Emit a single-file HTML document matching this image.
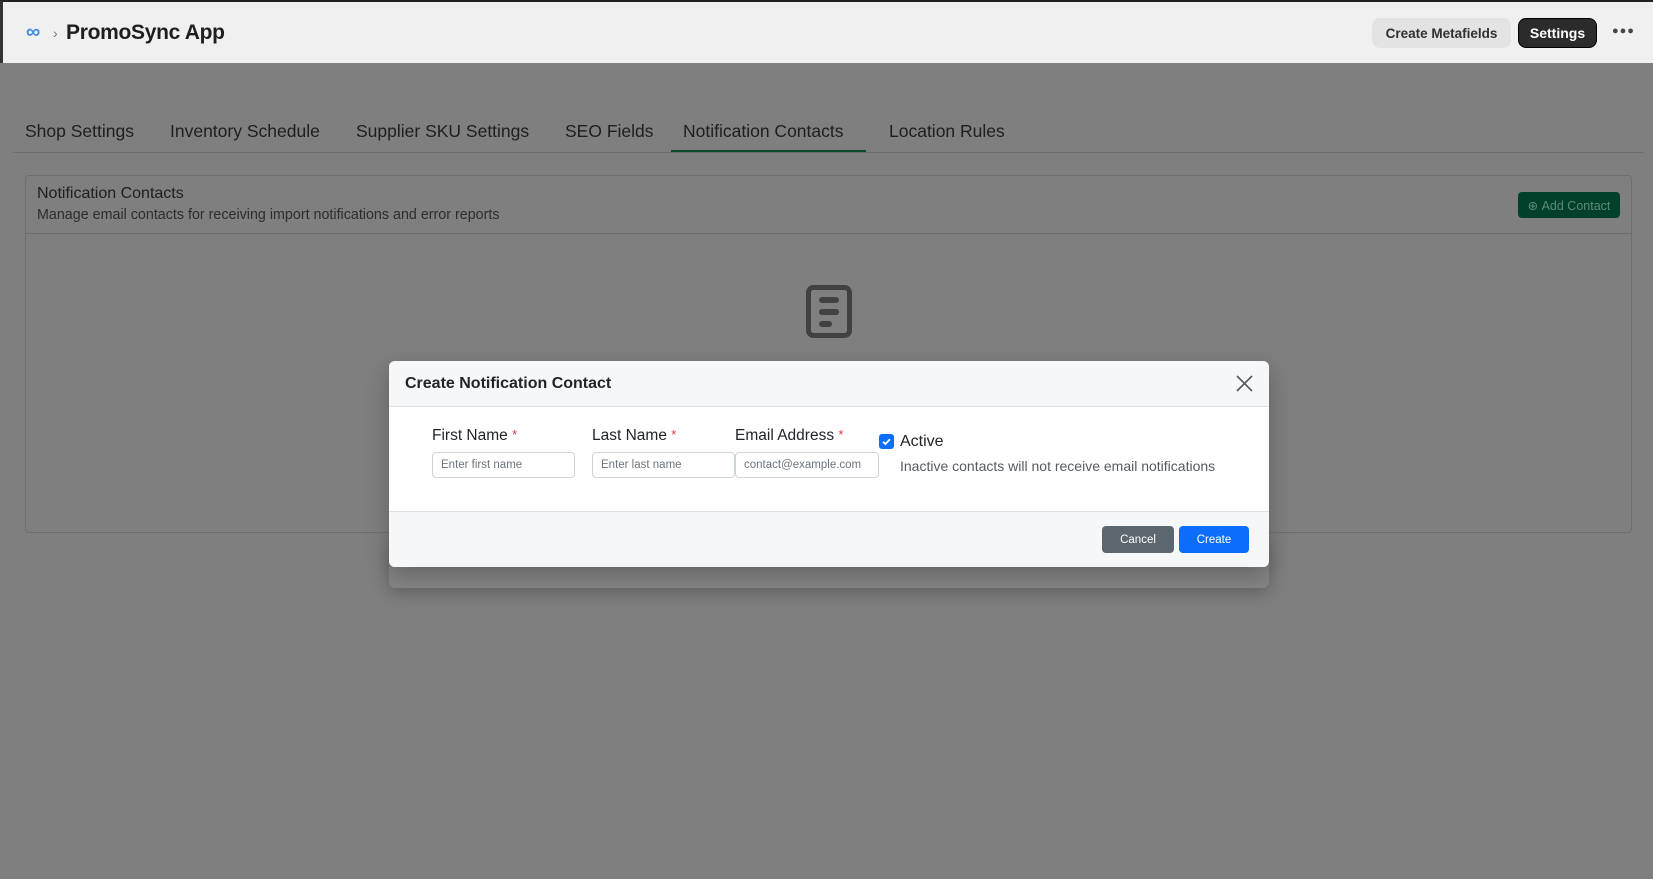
<!DOCTYPE html>
<html><head><meta charset="utf-8"><style>
*{box-sizing:border-box;margin:0;padding:0}
body{width:1653px;height:879px;overflow:hidden;font-family:"Liberation Sans",sans-serif;background:#7f7f7f;position:relative}
.hdr{position:absolute;left:0;top:0;width:1653px;height:63px;background:#f0f0f0;border-top:2px solid #222;border-left:3px solid #333}
.abs{position:absolute}
.btn{position:absolute;border-radius:8px;font-size:14px;font-weight:bold;display:flex;align-items:center;justify-content:center}
.tab{position:absolute;top:121px;font-size:17.5px;color:#1e1e1e}
.card{position:absolute;left:25px;top:175px;width:1607px;height:358px;border:1px solid #6f6f6f;border-radius:4px}
.modal{position:absolute;left:389px;top:361px;width:880px;height:206px;background:#fff;border-radius:6px;overflow:hidden;box-shadow:0 8px 24px rgba(0,0,0,.25)}
.lbl{position:absolute;top:427px;font-size:15.5px;color:#212529}
.lbl b{color:#dc3545;font-weight:normal;font-size:13px;vertical-align:top}
.inp{position:absolute;top:452px;height:26px;border:1px solid #ced4da;border-radius:4px;font-size:11.5px;color:#6c757d;padding:6px 8px;background:#fff}
</style></head><body>
<div class="hdr"></div>
<div class="abs" style="left:26px;top:21px;font-size:20px;color:#3b8ee0;font-weight:bold">∞</div>
<div class="abs" style="left:53px;top:25px;font-size:14px;color:#777">›</div>
<div class="abs" style="left:66px;top:21px;font-size:21px;color:#1e1e1e;font-weight:bold;letter-spacing:-0.3px">PromoSync App</div>
<div class="btn" style="left:1372px;top:18px;width:139px;height:30px;background:#e3e3e3;color:#303030;font-size:13.5px">Create Metafields</div>
<div class="btn" style="left:1518px;top:18px;width:79px;height:30px;background:#2b2b2b;color:#fff;border:1px solid #000">Settings</div>
<div class="abs" style="left:1612px;top:25px;font-size:11px;color:#444;letter-spacing:1px">●●●</div>

<div class="tab" style="left:25px">Shop Settings</div>
<div class="tab" style="left:170px">Inventory Schedule</div>
<div class="tab" style="left:356px">Supplier SKU Settings</div>
<div class="tab" style="left:565px">SEO Fields</div>
<div class="tab" style="left:683px">Notification Contacts</div>
<div class="tab" style="left:889px">Location Rules</div>
<div class="abs" style="left:13px;top:152px;width:1631px;height:1px;background:#6e6e6e"></div>
<div class="abs" style="left:671px;top:150px;width:195px;height:2px;background:#0b4a2d"></div>

<div class="card"></div>
<div class="abs" style="left:26px;top:233px;width:1605px;height:1px;background:#6e6e6e"></div>
<div class="abs" style="left:37px;top:185px;font-size:16px;color:#1e1e1e">Notification Contacts</div>
<div class="abs" style="left:37px;top:207px;font-size:14.3px;color:#2d2d2d">Manage email contacts for receiving import notifications and error reports</div>
<div class="btn" style="left:1518px;top:192px;width:102px;height:26px;background:#01402a;color:#5c8c74;font-weight:normal;font-size:12.5px;border-radius:4px">⊕&nbsp;Add Contact</div>
<svg class="abs" style="left:806px;top:285px" width="46" height="53" viewBox="0 0 46 53"><rect x="2.5" y="2.5" width="41" height="48" rx="5" fill="none" stroke="#3f4143" stroke-width="5"/><rect x="13" y="12" width="20" height="6" rx="3" fill="#3f4143"/><rect x="13" y="24" width="20" height="6" rx="3" fill="#3f4143"/><rect x="13" y="36" width="13" height="6" rx="3" fill="#3f4143"/></svg>

<div class="abs" style="left:389px;top:540px;width:880px;height:48px;background:#858585;border-radius:6px;box-shadow:0 6px 16px rgba(0,0,0,.2)"></div>
<div class="modal">
 <div style="position:absolute;left:0;top:0;width:880px;height:46px;background:#f6f7f9;border-bottom:1px solid #dee2e6"></div>
 <div style="position:absolute;left:0;top:150px;width:880px;height:56px;background:#f6f7f9;border-top:1px solid #dee2e6"></div>
</div>
<div class="abs" style="left:405px;top:375px;font-size:16px;font-weight:bold;color:#212529">Create Notification Contact</div>
<svg class="abs" style="left:1236px;top:375px" width="17" height="17" viewBox="0 0 17 17"><path d="M1 1L16 16M16 1L1 16" stroke="#555" stroke-width="1.6"/></svg>
<div class="lbl" style="left:432px">First Name <b>*</b></div>
<div class="lbl" style="left:592px">Last Name <b>*</b></div>
<div class="lbl" style="left:735px">Email Address <b>*</b></div>
<div class="inp" style="left:432px;width:143px">Enter first name</div>
<div class="inp" style="left:592px;width:143px">Enter last name</div>
<div class="inp" style="left:735px;width:144px">contact@example.com</div>
<svg class="abs" style="left:879px;top:434px" width="15" height="15" viewBox="0 0 15 15"><rect width="15" height="15" rx="3" fill="#0d6efd"/><path d="M4 7.8L6.4 10L11 5.2" fill="none" stroke="#fff" stroke-width="1.8"/></svg>
<div class="abs" style="left:900px;top:433px;font-size:16px;color:#212529">Active</div>
<div class="abs" style="left:900px;top:458px;font-size:14px;color:#555b61">Inactive contacts will not receive email notifications</div>
<div class="btn" style="left:1102px;top:526px;width:72px;height:27px;background:#5c666e;color:#fff;font-weight:normal;font-size:11.5px;border-radius:4px">Cancel</div>
<div class="btn" style="left:1179px;top:526px;width:70px;height:27px;background:#0d6efd;color:#fff;font-weight:normal;font-size:11.5px;border-radius:4px">Create</div>
</body></html>
